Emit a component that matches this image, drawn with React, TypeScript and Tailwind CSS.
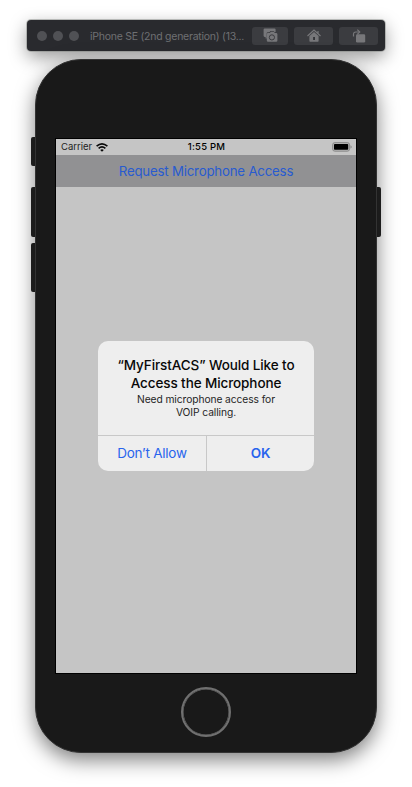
import type { ReactNode } from "react";

function ToolButton({ className, children }: { className: string; children: ReactNode }) {
  return (
    <button className={`flex h-[18px] items-center justify-center rounded-[3px] bg-[#3b3c40] ${className}`}>
      {children}
    </button>
  );
}

function ScreenshotIcon() {
  return (
    <svg width="15" height="15" viewBox="0 0 15 15">
      <path d="M1.700.4h9.800q1.100 0 1.100 1.100V4h-1.200l-.8-1H7.400l-.9 1.200H4.800q-1.100 0-1.100 1.100v5.200H2.600V8.900H1.700Q.6 8.900.6 7.800V1.500Q.6.4 1.700.4Z" fill="#77777a" />
      <path d="M5.100 5h1.800l.9-1.200h3.100l.9 1.200h1.300q1.300 0 1.300 1.300v6.200q0 1.300-1.300 1.300h-8q-1.300 0-1.300-1.300V6.300Q3.800 5 5.100 5Z" fill="#77777a" />
      <circle cx="8.900" cy="9.400" r="2.600" fill="none" stroke="#3b3c40" strokeWidth="1" />
    </svg>
  );
}

function HomeIcon() {
  return (
    <svg width="14" height="14" viewBox="0 0 14 14">
      <path d="M.5 7 7 1 13.500 7M11 4.700V2" fill="none" stroke="#77777a" strokeWidth="1.200" />
      <path d="M7 2.900 11.600 7.100V12q0 .8-.8.800H3.200q-.8 0-.8-.8V7.100Z" fill="#77777a" />
      <rect x="6.100" y="8" width="1.900" height="3" fill="#343539" />
    </svg>
  );
}

function RotateIcon() {
  return (
    <svg width="14" height="14" viewBox="0 0 14 14">
      <rect x="4" y="5.200" width="9.200" height="8.300" rx="1.300" fill="#77777a" />
      <path d="M1.500 7.500V5.300q0-2.300 2.300-2.300H7" fill="none" stroke="#77777a" strokeWidth="1.200" />
      <path d="m5.300.6 2.500 2.400-2.500 2.300" fill="none" stroke="#77777a" strokeWidth="1.100" />
    </svg>
  );
}

function WifiIcon() {
  return (
    <svg width="12" height="9" viewBox="0 0 12 9" fill="none" stroke="#080808" strokeWidth="1.600">
      <path d="M.6 3.200Q6-1.500 11.400 3.200M2.600 5.300q3.400-2.900 6.800 0" />
      <path d="m4.200 6.900 1.800 1.900 1.800-1.900q-1.800-1.400-3.600 0Z" fill="#080808" stroke="none" />
    </svg>
  );
}

function BatteryIcon() {
  return (
    <svg width="20" height="10" viewBox="0 0 20 10">
      <rect x=".6" y=".6" width="17" height="8.600" rx="2.300" fill="#b4b4b4" stroke="#868686" strokeWidth=".9" />
      <rect x="2" y="2" width="14.200" height="5.800" rx=".8" fill="#000" />
      <path d="M18.500 3.300q1.200.500 1.200 1.600t-1.200 1.600Z" fill="#868686" />
    </svg>
  );
}

function Toolbar() {
  return (
    <header className="ml-[27px] flex h-[31px] w-[358px] items-center rounded-[4px] bg-[#292a2e] pl-[10px] shadow-[0_0_0_1px_rgba(135,140,135,0.5),0_6px_18px_rgba(0,0,0,0.4)]">
      <div className="flex gap-[6px]">
        <i className="size-[10px] rounded-full bg-[#505155]" />
        <i className="size-[10px] rounded-full bg-[#505155]" />
        <i className="size-[10px] rounded-full bg-[#505155]" />
      </div>
      <span className="ml-[11px] mt-[2px] w-[163px] whitespace-nowrap text-[10.5px] tracking-[-0.25px] text-[#6f7073]">
        iPhone SE (2nd generation) (13...
      </span>
      <ToolButton className="-ml-px w-[36px]"><ScreenshotIcon /></ToolButton>
      <ToolButton className="ml-[6px] w-[39px]"><HomeIcon /></ToolButton>
      <ToolButton className="ml-[6px] w-[39px]"><RotateIcon /></ToolButton>
    </header>
  );
}

function PermissionDialog() {
  return (
    <section className="mt-[154px] flex h-[130px] w-[216px] flex-col overflow-hidden rounded-[10px] bg-[#eeeeee] text-center">
      <div className="flex h-[94px] flex-col items-center whitespace-nowrap pt-[15px]">
        <h1 className="text-[13.5px] font-[550] leading-[18px] tracking-[-0.1px] text-[#080808]">
          “MyFirstACS” Would Like to<br />Access the Microphone
        </h1>
        <p className="mt-px text-[10.25px] leading-[13px] tracking-[-0.08px] text-[#252525]">
          Need microphone access for<br />VOIP calling.
        </p>
      </div>
      <div className="flex flex-1 border-t border-[#c8c8c8] text-[13.5px] text-[#2864ed]">
        <button className="w-[109px] border-r border-[#c8c8c8] tracking-[-0.25px]">Don’t Allow</button>
        <button className="flex-1 font-semibold tracking-[-0.2px]">OK</button>
      </div>
    </section>
  );
}

export default function App() {
  return (
    <main className="h-[787px] w-[412px] overflow-hidden bg-white pt-[20px] font-['Inter','Liberation_Sans',sans-serif]">
      <Toolbar />
      <div className="relative ml-[35px] mt-[8px] h-[694px] w-[342px]">
        <i className="absolute -left-[4px] top-[78px] h-[29px] w-[8px] rounded-[2px] bg-[#242424]" />
        <i className="absolute -left-[4px] top-[128px] h-[50px] w-[8px] rounded-[2px] bg-[#242424]" />
        <i className="absolute -left-[4px] top-[184px] h-[49px] w-[8px] rounded-[2px] bg-[#242424]" />
        <i className="absolute -right-[4px] top-[128px] h-[50px] w-[8px] rounded-[2px] bg-[#242424]" />
        <div className="relative flex h-full flex-col items-center rounded-[46px] border border-[#333] bg-[#191919] pt-[78px] shadow-[0_7px_20px_rgba(0,0,0,0.5)]">
          <div className="flex h-[536px] w-[302px] flex-col items-center border border-black bg-[#c5c5c5]">
            <div className="grid h-[16px] w-full shrink-0 grid-cols-3 items-center pl-[5px] pr-[4px] text-[9.5px] text-[#1d1d1d]">
              <div className="flex items-center gap-[4px] pt-px"><span>Carrier</span><WifiIcon /></div>
              <span className="pt-px text-center font-medium tracking-[0.2px] text-black">1:55 PM</span>
              <div className="flex justify-end"><BatteryIcon /></div>
            </div>
            <button className="h-[32px] w-full shrink-0 bg-[#919193] pt-[2px] text-[13.25px] tracking-[-0.2px] text-[#285bd0]">
              Request Microphone Access
            </button>
            <PermissionDialog />
          </div>
          <div className="mt-[13px] size-[50px] rounded-full border-2 border-[#707070] shadow-[inset_0_0_0_0.5px_#707070]" />
        </div>
      </div>
    </main>
  );
}
